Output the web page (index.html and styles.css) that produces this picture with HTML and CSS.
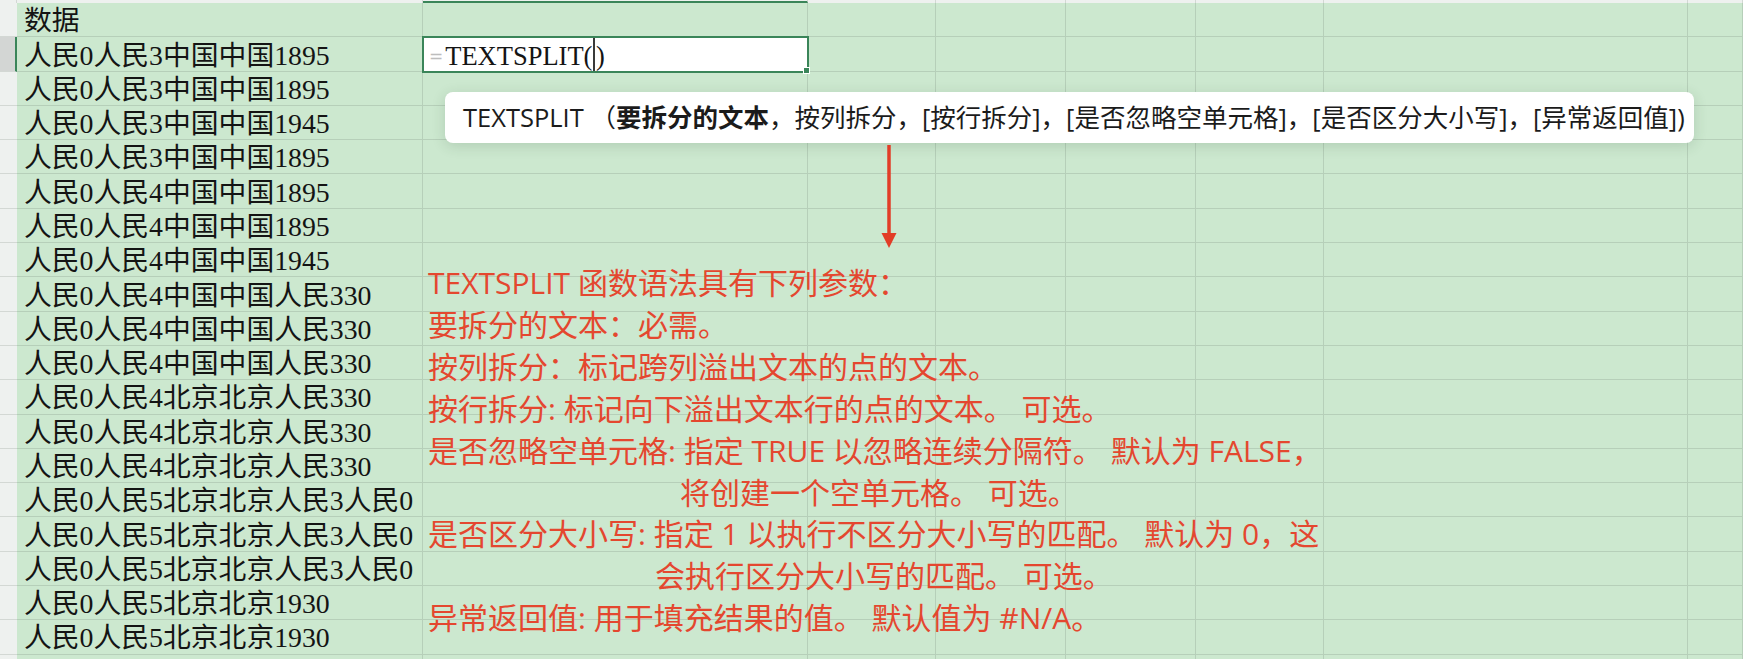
FILE: index.html
```html
<!DOCTYPE html>
<html lang="zh-CN">
<head>
<meta charset="utf-8">
<title>TEXTSPLIT 函数</title>
<link rel="stylesheet" href="styles.css">
</head>
<body>
<div class="sheet">
  <div class="row top"><div class="rh"></div><div class="c"></div><div class="c colsel"></div><div class="c"></div><div class="c"></div><div class="c"></div><div class="c"></div><div class="c"></div><div class="c"></div></div>
  <div class="row"><div class="rh"></div><div class="c a">数据</div><div class="c"></div><div class="c"></div><div class="c"></div><div class="c"></div><div class="c"></div><div class="c"></div><div class="c"></div></div>
  <div class="row"><div class="rh sel"></div><div class="c a">人民0人民3中国中国1895</div><div class="c active"><span class="eq">=</span><span class="fx">TEXTSPLIT(</span><span class="caret"></span><span class="fx">)</span></div><div class="c"></div><div class="c"></div><div class="c"></div><div class="c"></div><div class="c"></div><div class="c"></div></div>
  <div class="row"><div class="rh"></div><div class="c a">人民0人民3中国中国1895</div><div class="c"></div><div class="c"></div><div class="c"></div><div class="c"></div><div class="c"></div><div class="c"></div><div class="c"></div></div>
  <div class="row"><div class="rh"></div><div class="c a">人民0人民3中国中国1945</div><div class="c"></div><div class="c"></div><div class="c"></div><div class="c"></div><div class="c"></div><div class="c"></div><div class="c"></div></div>
  <div class="row"><div class="rh"></div><div class="c a">人民0人民3中国中国1895</div><div class="c"></div><div class="c"></div><div class="c"></div><div class="c"></div><div class="c"></div><div class="c"></div><div class="c"></div></div>
  <div class="row"><div class="rh"></div><div class="c a">人民0人民4中国中国1895</div><div class="c"></div><div class="c"></div><div class="c"></div><div class="c"></div><div class="c"></div><div class="c"></div><div class="c"></div></div>
  <div class="row"><div class="rh"></div><div class="c a">人民0人民4中国中国1895</div><div class="c"></div><div class="c"></div><div class="c"></div><div class="c"></div><div class="c"></div><div class="c"></div><div class="c"></div></div>
  <div class="row"><div class="rh"></div><div class="c a">人民0人民4中国中国1945</div><div class="c"></div><div class="c"></div><div class="c"></div><div class="c"></div><div class="c"></div><div class="c"></div><div class="c"></div></div>
  <div class="row"><div class="rh"></div><div class="c a">人民0人民4中国中国人民330</div><div class="c"></div><div class="c"></div><div class="c"></div><div class="c"></div><div class="c"></div><div class="c"></div><div class="c"></div></div>
  <div class="row"><div class="rh"></div><div class="c a">人民0人民4中国中国人民330</div><div class="c"></div><div class="c"></div><div class="c"></div><div class="c"></div><div class="c"></div><div class="c"></div><div class="c"></div></div>
  <div class="row"><div class="rh"></div><div class="c a">人民0人民4中国中国人民330</div><div class="c"></div><div class="c"></div><div class="c"></div><div class="c"></div><div class="c"></div><div class="c"></div><div class="c"></div></div>
  <div class="row"><div class="rh"></div><div class="c a">人民0人民4北京北京人民330</div><div class="c"></div><div class="c"></div><div class="c"></div><div class="c"></div><div class="c"></div><div class="c"></div><div class="c"></div></div>
  <div class="row"><div class="rh"></div><div class="c a">人民0人民4北京北京人民330</div><div class="c"></div><div class="c"></div><div class="c"></div><div class="c"></div><div class="c"></div><div class="c"></div><div class="c"></div></div>
  <div class="row"><div class="rh"></div><div class="c a">人民0人民4北京北京人民330</div><div class="c"></div><div class="c"></div><div class="c"></div><div class="c"></div><div class="c"></div><div class="c"></div><div class="c"></div></div>
  <div class="row"><div class="rh"></div><div class="c a">人民0人民5北京北京人民3人民0</div><div class="c"></div><div class="c"></div><div class="c"></div><div class="c"></div><div class="c"></div><div class="c"></div><div class="c"></div></div>
  <div class="row"><div class="rh"></div><div class="c a">人民0人民5北京北京人民3人民0</div><div class="c"></div><div class="c"></div><div class="c"></div><div class="c"></div><div class="c"></div><div class="c"></div><div class="c"></div></div>
  <div class="row"><div class="rh"></div><div class="c a">人民0人民5北京北京人民3人民0</div><div class="c"></div><div class="c"></div><div class="c"></div><div class="c"></div><div class="c"></div><div class="c"></div><div class="c"></div></div>
  <div class="row"><div class="rh"></div><div class="c a">人民0人民5北京北京1930</div><div class="c"></div><div class="c"></div><div class="c"></div><div class="c"></div><div class="c"></div><div class="c"></div><div class="c"></div></div>
  <div class="row"><div class="rh"></div><div class="c a">人民0人民5北京北京1930</div><div class="c"></div><div class="c"></div><div class="c"></div><div class="c"></div><div class="c"></div><div class="c"></div><div class="c"></div></div>
  <div class="row"><div class="rh"></div><div class="c a"></div><div class="c"></div><div class="c"></div><div class="c"></div><div class="c"></div><div class="c"></div><div class="c"></div><div class="c"></div></div>
</div>

<div class="tooltip">TEXTSPLIT （<b>要拆分的文本</b>，按列拆分，[按行拆分]，[是否忽略空单元格]，[是否区分大小写]，[异常返回值])</div>

<svg class="arrow" width="18" height="104" viewBox="0 0 18 104" aria-hidden="true">
  <line x1="9" y1="0" x2="9" y2="92" stroke="#e23d27" stroke-width="3.5"/>
  <polygon points="1.5,88 16.5,88 9,103" fill="#e23d27"/>
</svg>

<div class="note">
  <div>TEXTSPLIT 函数语法具有下列参数：</div>
  <div>要拆分的文本：必需。</div>
  <div>按列拆分：标记跨列溢出文本的点的文本。</div>
  <div>按行拆分: 标记向下溢出文本行的点的文本。 可选。</div>
  <div>是否忽略空单元格: 指定 TRUE 以忽略连续分隔符。 默认为 FALSE，</div>
  <div class="cont1">将创建一个空单元格。 可选。</div>
  <div>是否区分大小写: 指定 1 以执行不区分大小写的匹配。 默认为 0，这</div>
  <div class="cont2">会执行区分大小写的匹配。 可选。</div>
  <div>异常返回值: 用于填充结果的值。 默认值为 #N/A。</div>
</div>
</body>
</html>
```

FILE: styles.css
```css
:root {
  --bg: #cce8cf;
  --grid: #b6cfb9;
  --hdr: #eef1ef;
  --hdr-line: #d3d8d4;
  --green: #3a8559;
  --red: #e4472f;
}

* { box-sizing: border-box; }

html, body {
  margin: 0;
  padding: 0;
  width: 1743px;
  height: 659px;
  overflow: hidden;
  background: var(--bg);
}

body { position: relative; }

.sheet {
  display: flex;
  flex-direction: column;
}

.row {
  display: grid;
  grid-template-columns: 17px 406px 385px 128px 130px 130px 128px 364px 1fr;
  height: 34.3px;
}

.row.top {
  height: 3px;
}

.row.top .c,
.row.top .rh {
  background: var(--hdr);
  border-right: 1px solid var(--hdr-line);
  border-bottom: none;
}

.row.top .c.colsel {
  border-bottom: 2px solid var(--green);
}

.rh {
  background: var(--hdr);
  border-bottom: 1px solid var(--hdr-line);
}

.rh.sel {
  background: #d3d6d4;
  border-right: 2px solid var(--green);
}

.c {
  border-right: 1px solid var(--grid);
  border-bottom: 1px solid var(--grid);
  display: flex;
  align-items: center;
  white-space: nowrap;
  overflow: visible;
  min-width: 0;
}

.c.a {
  padding-left: 7px;
  padding-top: 3px;
  font-family: "Liberation Serif", "Noto Sans CJK SC", serif;
  font-size: 27.8px;
  line-height: 30px;
  color: #141414;
}

.c.active {
  position: relative;
  background: #ffffff;
  outline: 2px solid var(--green);
  outline-offset: -1px;
  padding-left: 6px;
}

.c.active::after {
  content: "";
  position: absolute;
  right: -3px;
  bottom: -3px;
  width: 5px;
  height: 5px;
  background: var(--green);
  border: 1px solid #ffffff;
}

.eq {
  color: #bdbdbd;
  font-family: "DejaVu Sans", sans-serif;
  font-size: 17px;
  margin-right: 2px;
  padding-top: 3px;
}

.fx {
  font-family: "Liberation Serif", serif;
  font-size: 26.5px;
  line-height: 30px;
  padding-top: 3px;
  color: #141414;
}

.caret {
  width: 1.5px;
  height: 34px;
  background: #3a3a3a;
  margin: 0 1px;
}

.tooltip {
  position: absolute;
  left: 445px;
  top: 92px;
  height: 51px;
  padding: 0 9px 0 18px;
  display: flex;
  align-items: center;
  background: #ffffff;
  border-radius: 8px;
  box-shadow: 0 3px 14px rgba(40, 70, 45, 0.16);
  font-family: "Open Sans", "Noto Sans CJK SC", sans-serif;
  font-size: 25.5px;
  line-height: 1;
  color: #1b1b1b;
  white-space: nowrap;
}

.tooltip b {
  font-weight: 700;
}

.arrow {
  position: absolute;
  left: 880px;
  top: 145px;
}

.note {
  position: absolute;
  left: 428px;
  top: 262px;
  color: var(--red);
  font-family: "Open Sans", "Noto Sans CJK SC", sans-serif;
  font-size: 30px;
  line-height: 41.9px;
  white-space: nowrap;
}

.note .cont1 { padding-left: 252px; }
.note .cont2 { padding-left: 227px; }
```
